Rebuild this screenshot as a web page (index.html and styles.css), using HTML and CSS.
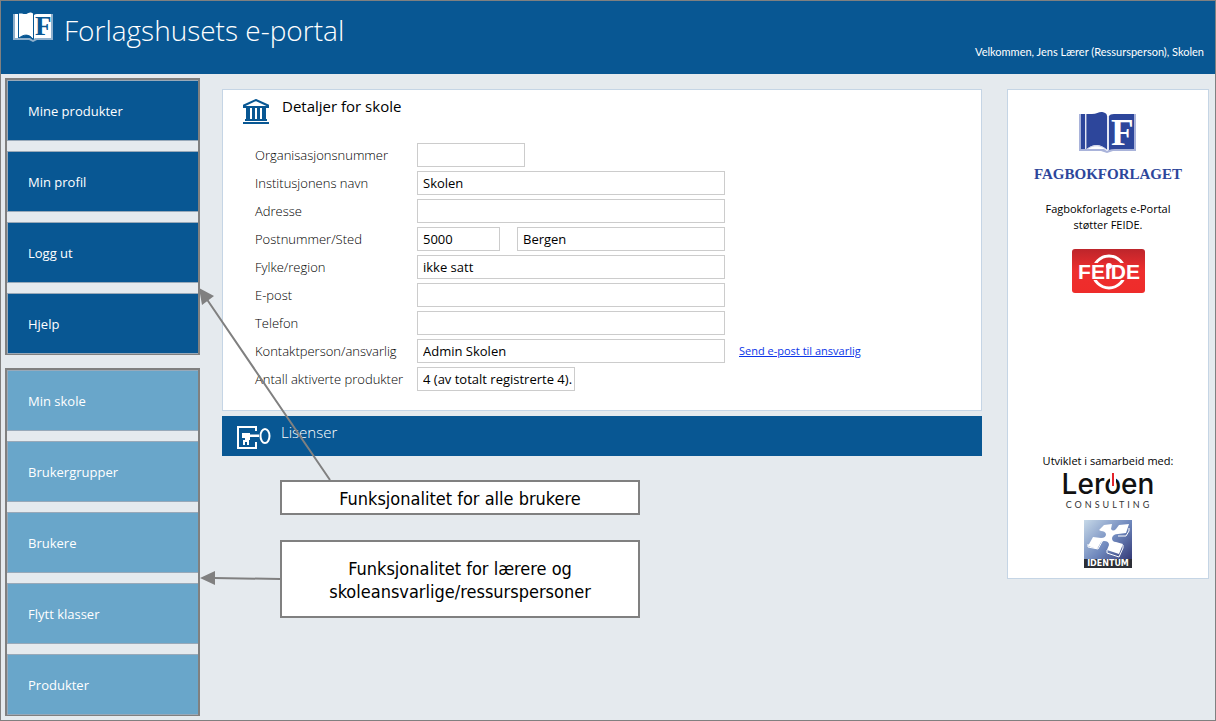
FILE: index.html
```html
<!DOCTYPE html>
<html lang="no">
<head>
<meta charset="utf-8">
<title>Forlagshusets e-portal</title>
<link rel="stylesheet" href="styles.css">
</head>
<body>
<div class="page">
  <header class="header">
    <svg class="header-logo" viewBox="0 0 40 30" width="40" height="30" aria-hidden="true">
      <path class="pale" d="M0 2h3v25h-3zM37 2h3v26h-3zM3 26h14l3 2 3-2h15v2H24l-4 2-4-2H0v-2z"/>
      <path class="fill" d="M2 2h3v24H2zM6 1.500h3c5 2 6-1.500 9-1 2 .5 2 1 2 2V27c-4-5-8-5-14-1zM21 3q1-1 3-1h14v24H25q-3 0-4 1z"/>
      <path class="line" d="M6 26c5-4 10-4 14 1"/>
      <text class="logo-f on-white" x="22" y="23">F</text>
    </svg>
    <h1 class="site-title">Forlagshusets e-portal</h1>
    <p class="welcome">Velkommen, Jens Lærer (Ressursperson), Skolen</p>
  </header>

  <div class="layout">
    <div class="sidebar">
      <nav class="menu" aria-label="Hovedmeny">
        <button class="menu-item" type="button">Mine produkter</button>
        <button class="menu-item" type="button">Min profil</button>
        <button class="menu-item" type="button">Logg ut</button>
        <button class="menu-item" type="button">Hjelp</button>
      </nav>
      <nav class="menu menu-light" aria-label="Skolemeny">
        <button class="menu-item" type="button">Min skole</button>
        <button class="menu-item" type="button">Brukergrupper</button>
        <button class="menu-item" type="button">Brukere</button>
        <button class="menu-item" type="button">Flytt klasser</button>
        <button class="menu-item" type="button">Produkter</button>
      </nav>
    </div>

    <main class="main">
      <section class="card details">
        <div class="card-head">
          <svg class="bank" viewBox="0 0 26 25" width="26" height="25" aria-hidden="true">
            <path class="bank-roof" d="M1 8v-1.500L13 1l12 5.500V8z"/>
            <path class="bank-body" d="M1 7.500h24V9H1zM3 9h4v12H3zM9 9h3v12H9zM14 9h3v12h-3zM19 9h4v12h-4zM2 20h22v2H2zM0 23h26v2H0z"/>
          </svg>
          <h2 class="card-title">Detaljer for skole</h2>
        </div>
        <form class="form">
          <div class="row"><label class="label" for="org">Organisasjonsnummer</label><input class="field w-org" id="org" type="text"></div>
          <div class="row"><label class="label" for="navn">Institusjonens navn</label><input class="field w-full" id="navn" type="text" value="Skolen"></div>
          <div class="row"><label class="label" for="adr">Adresse</label><input class="field w-full" id="adr" type="text"></div>
          <div class="row"><label class="label" for="post">Postnummer/Sted</label><input class="field w-post" id="post" type="text" value="5000"><input class="field w-city" type="text" aria-label="Sted" value="Bergen"></div>
          <div class="row"><label class="label" for="fylke">Fylke/region</label><input class="field w-full" id="fylke" type="text" value="ikke satt"></div>
          <div class="row"><label class="label" for="epost">E-post</label><input class="field w-full" id="epost" type="text"></div>
          <div class="row"><label class="label" for="tlf">Telefon</label><input class="field w-full" id="tlf" type="text"></div>
          <div class="row"><label class="label" for="kontakt">Kontaktperson/ansvarlig</label><input class="field w-full" id="kontakt" type="text" value="Admin Skolen"><a class="mail" href="#">Send e-post til ansvarlig</a></div>
          <div class="row"><label class="label" for="antall">Antall aktiverte produkter</label><input class="field w-count" id="antall" type="text" value="4 (av totalt registrerte 4)."></div>
        </form>
      </section>
      <section class="licenses">
        <svg class="key" viewBox="0 0 34 24" width="34" height="24" aria-hidden="true">
          <path class="key-line" d="M19 5V1H1v21h18v-6"/>
          <path class="key-fill" d="M5 7h8v1.500h9v2.500h-9v3h-1v5h-2v-3H8v3H6v-5h2v-2H5z"/>
          <ellipse class="key-line" cx="28" cy="10" rx="4.500" ry="7"/>
        </svg>
        <h2 class="card-title light">Lisenser</h2>
      </section>
    </main>

    <aside class="card partners">
      <svg class="publisher" viewBox="0 0 152 74" width="152" height="74" role="img" aria-label="Fagbokforlaget">
        <g transform="translate(47 0)">
          <path class="pale" d="M0 2h3v36H0zM54 2h3v37h-3zM0 37h25l3 2 3-2h26v2H34l-6 2-6-2H0z"/>
          <path class="blue" d="M2 2h4v35H2zM7 2h6c6 0 8-4 13-1 2 1 2 2 2 4v33C21 31 14 32 8 37H7zM30 4q1-2 5-2h20v35H36q-4 0-6 1z"/>
          <path class="pale-line" d="M7 2v35M8 37c7-5 14-4 20 1M29 4v34"/>
          <text class="logo-f on-blue" x="32" y="33">F</text>
        </g>
        <text class="publisher-name" x="76" y="67">FAGBOKFORLAGET</text>
      </svg>
      <p class="note">Fagbokforlagets e-Portal<br>støtter FEIDE.</p>
      <svg class="feide" viewBox="0 0 73 44" width="73" height="44" role="img" aria-label="Feide">
        <defs><linearGradient id="red" x2="0" y2="1"><stop offset="0" stop-color="#bd252b"/><stop offset=".5" stop-color="#ee2e2e"/><stop offset="1" stop-color="#ee2c2a"/></linearGradient></defs>
        <rect width="73" height="44" rx="3" fill="url(#red)"/>
        <circle class="feide-ring" cx="37" cy="23" r="16"/>
        <path class="feide-gap" d="M19 14h36v17H19z"/>
        <text class="feide-text" x="37" y="30">FEIDE</text>
        <circle class="feide-dot" cx="37" cy="17" r="3"/>
      </svg>
      <div class="makers">
        <p class="note">Utviklet i samarbeid med:</p>
        <svg class="leroen" viewBox="0 0 96 36" width="96" height="36" role="img" aria-label="Lerøen Consulting">
          <text class="leroen-name" x="48" y="21">Leroen</text>
          <path class="power-gap" d="M53 0v11"/>
          <path class="power" d="M53 0v13"/>
          <text class="leroen-sub" x="49" y="35">CONSULTING</text>
        </svg>
        <svg class="identum" viewBox="0 0 48 48" width="48" height="48" role="img" aria-label="Identum">
          <defs><linearGradient id="steel" x2="1" y2="1"><stop offset="0" stop-color="#c7d9e8"/><stop offset=".5" stop-color="#6f88bd"/><stop offset="1" stop-color="#262867"/></linearGradient></defs>
          <rect width="48" height="48" fill="url(#steel)"/>
          <path class="tiles-line" d="M4 24v3l10 2 5-9M23 30v3l12 4 4-9v-3M45 8v3l-3 5h-8"/>
          <path class="tiles" d="M20 5l8-1-1 5q2 3 5 0l3-4 10-1-3 9-8 1q-5 0-6 4 0 4 4 4l7 2-4 10-12-4 2-5q0-4-5-4-3 0-4 3l-3 5-9-3 5-9 8 1q5 0 5-4-1-3-5-3l-2-1z"/>
          <path class="identum-bar" d="M0 39h48v9H0z"/>
          <text class="identum-text" x="24" y="46">IDENTUM</text>
        </svg>
      </div>
    </aside>
  </div>

  <svg class="arrows" viewBox="0 0 1216 721" width="1216" height="721" aria-hidden="true">
    <path class="arrow-line" d="M330 480L206 298M280 579L214 578"/>
    <path class="arrow-head" d="M199 288l15 8-12 9zM200 578l15-7v14z"/>
  </svg>
  <div class="callout callout-all">Funksjonalitet for alle brukere</div>
  <div class="callout callout-staff">Funksjonalitet for lærere og skoleansvarlige/ressurspersoner</div>
</div>
</body>
</html>
```
FILE: styles.css
```css
* { box-sizing: border-box; }

body {
  margin: 0;
  background: #e5eaee;
  color: #000;
  font-family: "Open Sans", "Noto Sans", sans-serif;
  font-size: 13px;
}

h1, h2, p { margin: 0; font-weight: 300; }
svg { display: block; flex: none; }

.page {
  position: relative;
  min-height: 100vh;
  border: 1px solid #808080;
}

.header {
  display: flex;
  align-items: flex-start;
  gap: 11px;
  height: 73px;
  padding: 11px 11px 0 12px;
  background: #085793;
  color: #fff;
}
.site-title { font-size: 28px; line-height: 36px; }
.welcome {
  margin-left: auto;
  padding-top: 31px;
  font-family: "Lato", sans-serif;
  font-size: 11px;
  line-height: 18px;
  font-weight: 400;
}

.pale { fill: #a9b3da; }
.header-logo .pale { fill: #8fb0cc; }
.fill { fill: #fff; }
.line { fill: none; stroke: #085793; }
.logo-f { font-family: "Liberation Serif", serif; font-weight: 700; }
.on-white { fill: #085793; font-size: 27px; }
.on-blue { fill: #fff; font-size: 37px; }
.publisher { overflow: visible; }

.layout {
  display: grid;
  grid-template-columns: 195px minmax(0, 1fr) 202px;
  align-items: start;
  padding: 4px 6px 4px 4px;
}

.sidebar { display: grid; gap: 13px; }
.menu {
  display: grid;
  gap: 10px;
  border: 2px solid #808080;
  border-bottom-width: 1px;
}
.menu-item {
  height: 61px;
  padding: 1px 20px 0;
  border: 1px solid #98a9b9;
  border-right: 0;
  background: #085793;
  color: #fff;
  font: inherit;
  text-align: left;
}
.menu-light .menu-item { background: #69a6ca; }

.main { padding: 11px 25px 0 22px; }
.card { border: 1px solid #c5d5e5; background: #fff; }
.details { padding: 8px 20px 19px; }
.card-head { display: flex; gap: 13px; }
.bank { margin-top: 1px; }
.card-title { font-size: 15px; line-height: 17px; font-weight: 400; }
.card-title.light { font-weight: 300; }
.bank-roof { fill: none; stroke: #085793; stroke-width: 2; }
.bank-body { fill: #085793; }

.form { display: grid; gap: 4px; padding: 19px 0 0 12px; }
.row { display: flex; align-items: center; }
.label { width: 162px; font-weight: 300; white-space: nowrap; }
.field {
  height: 24px;
  padding: 0 5px;
  border: 1px solid #ccc;
  background: #fff;
  color: #000;
  font: inherit;
}
.w-org { width: 108px; }
.w-full { width: 308px; }
.w-post { width: 83px; margin-right: 17px; }
.w-city { width: 208px; }
.w-count { width: 158px; padding-right: 0; }
.mail { margin-left: 14px; color: #0b35e8; font-size: 11px; line-height: 16px; }

.licenses {
  display: flex;
  gap: 10px;
  height: 40px;
  margin-top: 5px;
  padding: 8px 15px;
  background: #085793;
  color: #fff;
}
.key { margin-top: 2px; }
.key-line { fill: none; stroke: #fff; stroke-width: 2; }
.key-fill { fill: #fff; }

.partners {
  display: flex;
  flex-direction: column;
  align-items: center;
  min-height: 490px;
  margin-top: 11px;
  padding: 22px 0 10px;
  text-align: center;
}
.note { font-size: 11px; line-height: 16px; font-weight: 400; }
.publisher { margin-bottom: 15px; }
.blue { fill: #2d469b; }
.pale-line { fill: none; stroke: #c6cce6; }
.publisher-name {
  fill: #2d469b;
  font: 700 15px "Liberation Serif", serif;
  text-anchor: middle;
}
.feide { margin-top: 16px; }
.feide-ring { fill: none; stroke: #fff; stroke-width: 3; }
.feide-gap { fill: #e92d2e; }
.feide-text {
  fill: #fff;
  font: 700 21px "Liberation Sans", sans-serif;
  text-anchor: middle;
}
.feide-dot { fill: #fff; }
.makers {
  display: flex;
  flex-direction: column;
  align-items: center;
  margin-top: auto;
}
.leroen { margin: 4px 0 11px; overflow: visible; }
.leroen-name { fill: #111; font: 500 28px "Inter", sans-serif; text-anchor: middle; }
.power-gap { stroke: #fff; stroke-width: 6; }
.power { stroke: #e3242b; stroke-width: 2; }
.leroen-sub { fill: #333; font: 400 9px "Lato", sans-serif; letter-spacing: 3px; text-anchor: middle; }
.tiles { fill: #fff; }
.tiles-line { fill: none; stroke: #fff; }
.identum-bar { fill: #2c2f36; }
.identum-text { fill: #fff; font: 700 8px "DejaVu Sans", sans-serif; text-anchor: middle; }

.arrows { position: absolute; left: -1px; top: -1px; pointer-events: none; }
.arrow-line { fill: none; stroke: #808080; stroke-width: 2; }
.arrow-head { fill: #808080; }
.callout {
  position: absolute;
  left: 279px;
  display: flex;
  align-items: center;
  justify-content: center;
  width: 360px;
  padding: 2px 40px 0;
  border: 2px solid #808080;
  background: #fff;
  font: 18px/23px "DejaVu Sans Condensed", "DejaVu Sans", sans-serif;
  text-align: center;
}
.callout-all { top: 479px; height: 35px; }
.callout-staff { top: 539px; height: 78px; }
```
